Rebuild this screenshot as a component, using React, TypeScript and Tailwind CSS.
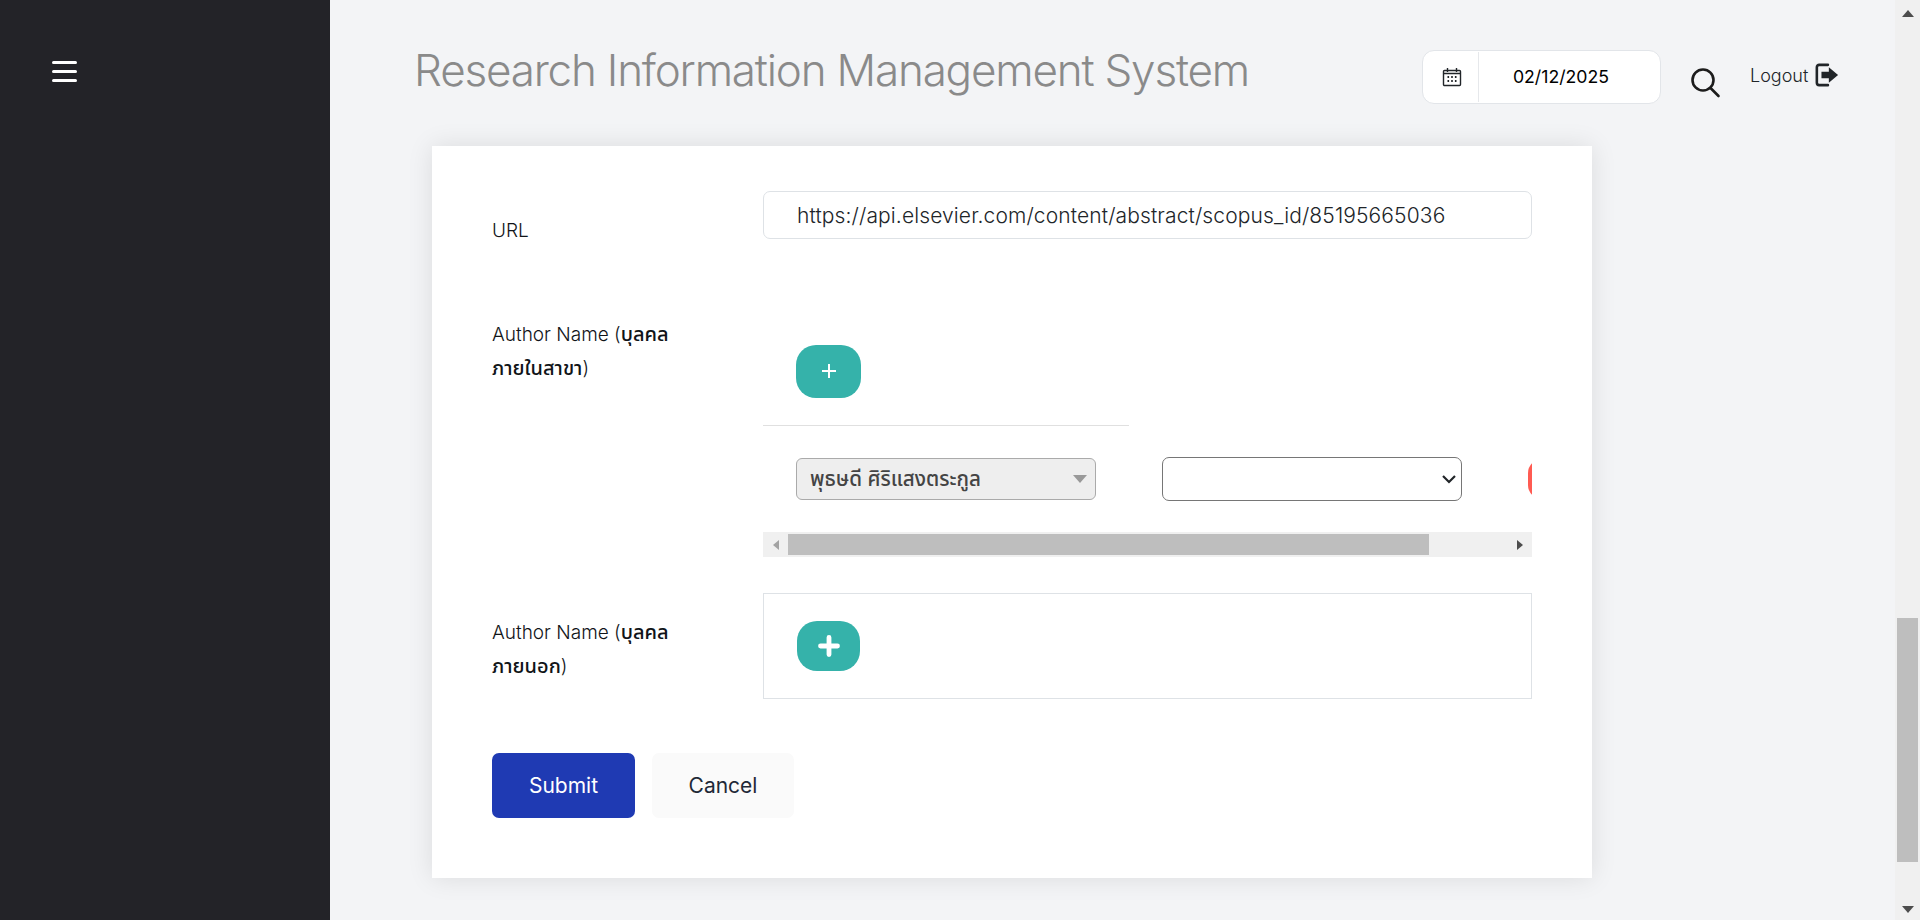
import React from "react";

const font = { fontFamily: '"Inter", "Noto Sans Thai", "Noto Sans", "DejaVu Sans", sans-serif' };

function Label({ children, className = "" }: { children: React.ReactNode; className?: string }) {
  return <div className={`w-[271px] shrink-0 pr-[50px] text-[19px] leading-[34px] font-light text-[#111418] ${className}`}>{children}</div>;
}

function Tri({ dir, className = "" }: { dir: "l" | "r" | "u" | "d"; className?: string }) {
  const pts = { l: "7,1 1,6 7,11", r: "1,1 7,6 1,11", u: "1,8 7,1 13,8", d: "1,1 7,8 13,1" }[dir];
  const w = dir === "l" || dir === "r" ? 8 : 14;
  const h = dir === "l" || dir === "r" ? 12 : 9;
  return (
    <svg width={w} height={h} viewBox={`0 0 ${w} ${h}`} className={className}>
      <polygon points={pts} fill="currentColor" />
    </svg>
  );
}

export default function App() {
  return (
    <div className="flex h-[920px] w-full overflow-hidden bg-[#f3f4f6]" style={font}>
      <aside className="w-[330px] shrink-0 bg-[#232328] pl-[52px] pt-[61px]">
        <div className="flex h-[21px] w-[25px] flex-col justify-between">
          <div className="h-[3px] rounded-full bg-white" />
          <div className="h-[3px] rounded-full bg-white" />
          <div className="h-[3px] rounded-full bg-white" />
        </div>
      </aside>

      <main className="min-w-0 flex-1">
        <header className="flex h-[146px] items-start pl-[84px]">
          <h1 className="mt-[41px] w-[835px] shrink-0 text-[44px] leading-[58px] font-light tracking-[-1.2px] whitespace-nowrap text-[#8a8a8a]">
            Research Information Management System
          </h1>
          <div className="mt-[50px] ml-[173px] flex h-[54px] w-[239px] shrink-0 rounded-[12px] border border-[#e2e5e9] bg-white">
            <div className="my-[1px] flex w-[56px] items-center justify-center border-r border-[#e6e8eb] pl-[2px]">
              <svg width="20" height="20" viewBox="0 0 20 20" fill="none" stroke="#212529" strokeWidth="1.4">
                <rect x="1.5" y="3.5" width="17" height="15" rx="1" />
                <path d="M5.5 1v4M14.500 1v4M1.500 6.500h17" />
                <path d="M5.500 10h1.600M9.200 10h1.600M12.900 10h1.600M5.500 14h1.600M9.200 14h1.600M12.900 14h1.600" strokeWidth="2" />
              </svg>
            </div>
            <div className="flex flex-1 items-center justify-center pr-[17px] text-[17.7px] text-black">02/12/2025</div>
          </div>
          <svg className="mt-[67px] ml-[29px] shrink-0" width="31" height="31" viewBox="0 0 31 31" fill="none" stroke="#1c1c1c" strokeWidth="2.6">
            <circle cx="13" cy="13" r="10.5" />
            <path d="M20.500 21l8 8" strokeLinecap="round" />
          </svg>
          <div className="mt-[62px] ml-[29px] text-[18px] leading-[28px] font-light text-[#212529]">Logout</div>
          <svg className="mt-[61px] ml-[7px] shrink-0" width="24" height="28" viewBox="0 0 26 28">
            <path d="M14 3H4.500A2.500 2.500 0 0 0 2 5.500v17A2.500 2.500 0 0 0 4.500 25H14" fill="none" stroke="#212529" strokeWidth="2.8" strokeLinecap="round" />
            <path d="M7 10.500h8V5.500L25 14l-10 8.500v-5H7z" fill="#212529" />
          </svg>
        </header>

        <div className="ml-[102px] flex h-[732px] w-[1160px] flex-col bg-white px-[60px] pt-[45px] shadow-[0_0_24px_rgba(0,0,0,0.10)]">
          <div className="flex">
            <Label className="pt-[23px]">URL</Label>
            <input
              readOnly
              value="https://api.elsevier.com/content/abstract/scopus_id/85195665036"
              className="h-[48px] w-[769px] rounded-[7px] border border-[#dee2e6] bg-white pl-[33px] text-[21px] font-light tracking-[0.12px] text-[#212529] outline-none"
            />
          </div>

          <div className="mt-[70px] flex">
            <Label>
              Author Name (<span className="text-[20px] leading-none font-medium">บุลคล ภายในสาขา</span>)
            </Label>
            <div className="w-[769px]">
              <button className="mt-[27px] ml-[33px] flex h-[53px] w-[65px] items-center justify-center rounded-[20px] bg-[#35b2aa]">
                <svg className="-mt-[2px]" width="16" height="16" viewBox="0 0 16 16" stroke="#fff" strokeWidth="2">
                  <path d="M8 1v14M1 8h14" />
                </svg>
              </button>
              <div className="mt-[27px] h-px w-[366px] bg-[#e0e0e0]" />
              <div className="mt-[31px] flex h-[44px] items-center overflow-hidden pl-[33px]">
                <div className="relative flex h-[42px] w-[300px] shrink-0 items-center rounded-[6px] border border-[#aaaaaa] bg-[#eeeeee] pl-[13px] text-[20.6px] font-medium text-[#444444]">
                  พุธษดี ศิริแสงตระกูล
                  <span className="absolute top-[16px] right-[8px] h-0 w-0 border-x-[7px] border-t-[8px] border-x-transparent border-t-[#999999]" />
                </div>
                <div className="relative ml-[66px] h-[44px] w-[300px] shrink-0">
                  <select className="h-full w-full appearance-none rounded-[7px] border border-[#767676] bg-white">
                    <option></option>
                  </select>
                  <svg className="absolute top-[17px] right-[6px]" width="14" height="10" viewBox="0 0 14 10" fill="none" stroke="#212529" strokeWidth="2.2">
                    <path d="M1 2l6 6 6-6" />
                  </svg>
                </div>
                <div className="ml-[66px] h-[40px] w-[60px] shrink-0 rounded-[14px] bg-[#ff5b52]" />
              </div>
              <div className="mt-[31px] flex h-[25px] items-center bg-[#f0f0f0]">
                <div className="flex w-[25px] shrink-0 justify-center text-[#a3a3a3]"><Tri dir="l" /></div>
                <div className="h-[21px] w-[641px] bg-[#bebebe]" />
                <div className="ml-auto flex w-[25px] shrink-0 justify-center text-[#4d4d4d]"><Tri dir="r" /></div>
              </div>
            </div>
          </div>

          <div className="mt-[36px] flex">
            <Label className="pt-[23px]">
              Author Name (<span className="text-[20px] leading-none font-medium">บุลคล ภายนอก</span>)
            </Label>
            <div className="h-[106px] w-[769px] border border-[#dee2e6] pt-[27px] pl-[33px]">
              <button className="flex h-[50px] w-[63px] items-center justify-center rounded-[20px] bg-[#35b2aa]">
                <svg width="22" height="22" viewBox="0 0 22 22" stroke="#fff" strokeWidth="4.8" strokeLinecap="round">
                  <path d="M11 2.500v17M2.500 11h17" />
                </svg>
              </button>
            </div>
          </div>

          <div className="mt-[54px] flex gap-[17px]">
            <button className="h-[65px] w-[143px] rounded-[7px] bg-[#1f3ab3] text-[21px] font-normal text-white">Submit</button>
            <button className="h-[65px] w-[142px] rounded-[7px] bg-[#fafafa] text-[21px] font-normal text-[#1f2937]">Cancel</button>
          </div>
        </div>
      </main>

      <div className="flex w-[25px] shrink-0 flex-col items-center bg-[#f0f0f0] text-[#4d4d4d]">
        <Tri dir="u" className="mt-[9px]" />
        <div className="mt-[600px] h-[244px] w-[21px] bg-[#bebebe]" />
        <Tri dir="d" className="mt-[43px]" />
      </div>
    </div>
  );
}
